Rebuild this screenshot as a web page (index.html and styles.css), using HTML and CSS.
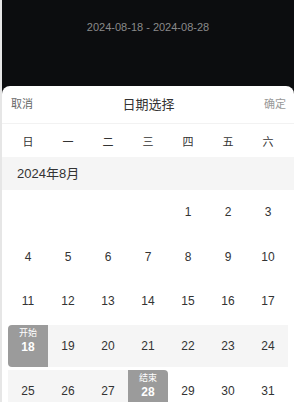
FILE: index.html
```html
<!DOCTYPE html>
<html lang="zh">
<head>
	<meta charset="utf-8">
	<title>日期选择</title>
	<link rel="stylesheet" href="styles.css">
</head>
<body>
<div class="page">
	<div class="top">2024-08-18 - 2024-08-28</div>
	<div class="sheet">
		<div class="head">
			<span class="cancel">取消</span>
			<span class="title">日期选择</span>
			<span class="ok">确定</span>
		</div>
		<div class="week">
			<span>日</span><span>一</span><span>二</span><span>三</span><span>四</span><span>五</span><span>六</span>
		</div>
		<div class="month">2024年8月</div>
		<div class="days">
			<div class="day"></div><div class="day"></div><div class="day"></div><div class="day"></div>
			<div class="day">1</div><div class="day">2</div><div class="day">3</div>
			<div class="day">4</div><div class="day">5</div><div class="day">6</div><div class="day">7</div>
			<div class="day">8</div><div class="day">9</div><div class="day">10</div>
			<div class="day">11</div><div class="day">12</div><div class="day">13</div><div class="day">14</div>
			<div class="day">15</div><div class="day">16</div><div class="day">17</div>
			<div class="day start"><small>开始</small><b>18</b></div>
			<div class="day range">19</div><div class="day range">20</div><div class="day range">21</div>
			<div class="day range">22</div><div class="day range">23</div><div class="day range">24</div>
			<div class="day range">25</div><div class="day range">26</div><div class="day range">27</div>
			<div class="day end"><small>结束</small><b>28</b></div>
			<div class="day">29</div><div class="day">30</div><div class="day">31</div>
		</div>
	</div>
</div>
</body>
</html>
```

FILE: styles.css
```css
html, body{
	margin: 0;
	height: 100%;
	overflow: hidden;
}
body{
	background: #e6e6e6;
	font-family: "Liberation Sans", "Noto Sans CJK SC", sans-serif;
	color: #333;
}
.page{
	margin-left: 2px;
	height: 100%;
	background: #0c0d0f;
}
.top{
	height: 86px;
	box-sizing: border-box;
	padding-top: 21px;
	text-align: center;
	font-size: 11px;
	color: #8a8a8a;
}
.sheet{
	background: #fff;
	border-radius: 8px 8px 0 0;
	height: 316px;
	overflow: hidden;
}
.head{
	display: flex;
	align-items: center;
	justify-content: space-between;
	height: 38px;
	box-sizing: border-box;
	padding: 0 8px 3px 9px;
	border-bottom: 1px solid #f2f2f2;
}
.cancel{
	font-size: 11px;
	color: #666;
}
.title{
	font-size: 13px;
	color: #333;
}
.ok{
	font-size: 11px;
	color: #999;
}
.week{
	display: grid;
	grid-template-columns: repeat(7, 40px);
	padding: 0 6px;
	height: 33px;
	align-items: center;
	justify-items: center;
	font-size: 11px;
}
.month{
	display: flex;
	align-items: center;
	height: 33px;
	box-sizing: border-box;
	padding: 0 0 2px 15px;
	background: #f5f5f5;
	font-size: 13px;
}
.days{
	display: grid;
	grid-template-columns: repeat(7, 40px);
	grid-auto-rows: 42px;
	row-gap: 2.7px;
	padding: 1px 6px 0;
}
.day{
	display: flex;
	flex-direction: column;
	align-items: center;
	justify-content: center;
	font-size: 12px;
}
.range{
	background: #f5f5f5;
}
.start, .end{
	background: #9b9b9b;
	color: #fff;
	justify-content: flex-start;
	padding-top: 3px;
	box-sizing: border-box;
}
.start{
	border-radius: 4px 0 0 4px;
}
.end{
	border-radius: 0 4px 4px 0;
}
.day small{
	font-size: 9px;
	line-height: 11px;
}
.day b{
	font-size: 12px;
	line-height: 16px;
}
```
